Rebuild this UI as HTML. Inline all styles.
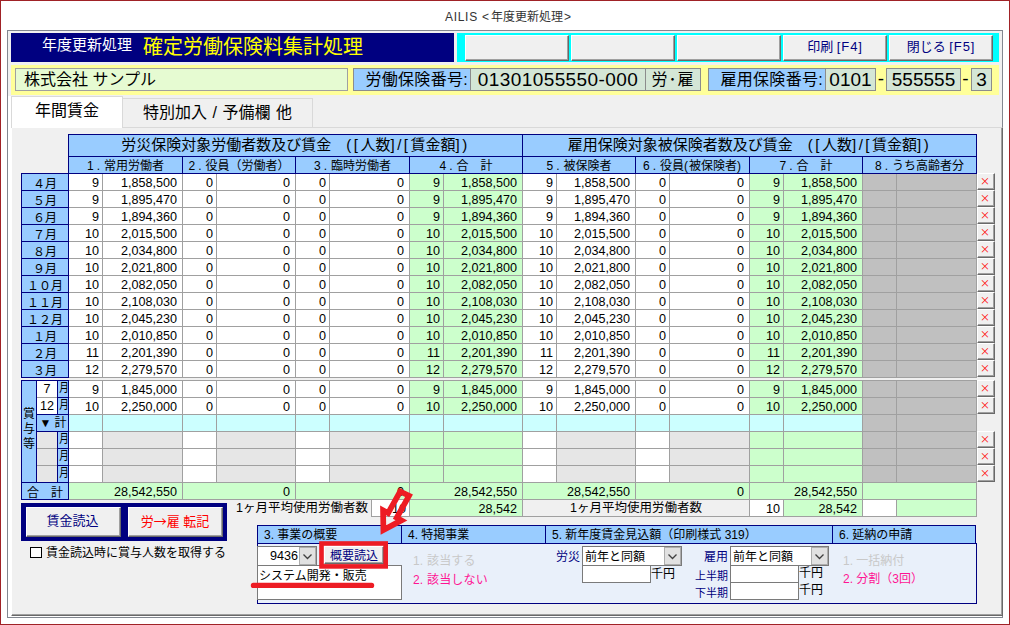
<!DOCTYPE html>
<html lang="ja"><head><meta charset="utf-8"><title>AILIS</title>
<style>
html,body{margin:0;padding:0}
body{width:1010px;height:625px;position:relative;overflow:hidden;background:#fff;font-family:"Liberation Sans","Noto Sans CJK JP",sans-serif;color:#000}
div,span{position:absolute;box-sizing:border-box;white-space:nowrap}
svg{position:absolute}
.n{font-size:12.6px;line-height:18px;text-align:right;overflow:hidden}
.c{padding-right:3px}
.m{padding-right:5px}
.hd{background:#99ccff;border:1px solid #000080;text-align:center}
.h1{font-size:15px;line-height:19px}
i{font-style:normal}
.h2 i{margin:0 4px 0 3px}
.nr{display:inline-block;transform:scaleX(.8)}
.q{letter-spacing:.9px}
.p{letter-spacing:2.5px}
.h2{font-size:12px;line-height:18px}
.lb{background:#99ccff;border:1px solid #000080;text-align:center;font-size:12px;line-height:20px;overflow:hidden}
.btn{background:#f0f0f0;border-top:1px solid #fff;border-left:1px solid #fff;border-right:1px solid #696969;border-bottom:1px solid #696969;box-shadow:inset -1px -1px 0 #a0a0a0;text-align:center;color:#000080}
.xb{background:#f0f0f0;border-top:1px solid #fff;border-left:1px solid #fff;border-right:1px solid #696969;border-bottom:1px solid #696969;box-shadow:inset -1px -1px 0 #a0a0a0;text-align:center;color:#f00;font-family:"Noto Sans CJK JP",sans-serif;font-size:10px;line-height:13px;text-indent:-2px}
.sh{background:#99ccff;border:1px solid #000080;font-size:12px;line-height:18px;padding-left:6px}
.fld{background:#d4e6d6;border:1px solid #8c8c8c;font-size:19px;line-height:21px;text-align:center}
.t12{font-size:12px;line-height:14px}
.inp{background:#fff;border:1px solid #7a7a7a}
</style></head><body>

<div style="left:0px;top:0px;width:1010px;height:625px;border:1px solid #a02226;"></div>
<div style="left:445px;top:9px;width:140px;height:16px;font-size:12px;line-height:16px;color:#333;"><i style="letter-spacing:.7px">AILIS </i><i style="letter-spacing:2px">&lt;</i>年度更新処理<i style="margin-left:1px">&gt;</i></div>
<div style="left:7px;top:30px;width:996px;height:588px;border:1px solid #828790;background:#f0f0f0;"></div>
<div style="left:11px;top:33px;width:443px;height:29px;background:#000080;"></div>
<div style="left:42px;top:35px;width:100px;height:20px;color:#fff;font-size:15px;line-height:20px;">年度更新処理</div>
<div style="left:143px;top:35px;width:300px;height:24px;color:#ffff00;font-size:20px;line-height:24px;">確定労働保険料集計処理</div>
<div style="left:457px;top:33px;width:542px;height:29px;background:#00ffff;"></div>
<div class="btn" style="left:465px;top:35px;width:104px;height:26px;font-size:13px;line-height:22px;"></div>
<div class="btn" style="left:571px;top:35px;width:104px;height:26px;font-size:13px;line-height:22px;"></div>
<div class="btn" style="left:677px;top:35px;width:104px;height:26px;font-size:13px;line-height:22px;"></div>
<div class="btn" style="left:783px;top:35px;width:104px;height:26px;font-size:13px;line-height:22px;">印刷 <i class="q">[F4]</i></div>
<div class="btn" style="left:889px;top:35px;width:104px;height:26px;font-size:13px;line-height:22px;">閉じる <i class="q">[F5]</i></div>
<div style="left:11px;top:65px;width:988px;height:30px;background:#ffff99;"></div>
<div style="left:15px;top:68px;width:333px;height:23px;background:#e6fbd2;border:1px solid #a0a0a0;font-size:16px;line-height:21px;padding-left:8px;">株式会社 サンプル</div>
<div style="left:353px;top:68px;width:118px;height:23px;background:#99ccff;border:1px solid #8c8c8c;font-size:16px;line-height:21px;text-align:right;padding-right:2px;letter-spacing:.3px;">労働保険番号:</div>
<div class="fld" style="left:470px;top:68px;width:176px;height:23px;letter-spacing:.4px;">01301055550-000</div>
<div class="fld" style="left:645px;top:68px;width:56px;height:23px;font-size:16px;letter-spacing:1px;">労･雇</div>
<div style="left:708px;top:68px;width:118px;height:23px;background:#99ccff;border:1px solid #8c8c8c;font-size:16px;line-height:21px;text-align:right;padding-right:2px;letter-spacing:.3px;">雇用保険番号:</div>
<div class="fld" style="left:825px;top:68px;width:51px;height:23px;">0101</div>
<div style="left:876px;top:68px;width:10px;height:23px;font-size:19px;line-height:21px;text-align:center;">-</div>
<div class="fld" style="left:886px;top:68px;width:75px;height:23px;">555555</div>
<div style="left:960px;top:68px;width:11px;height:23px;font-size:19px;line-height:21px;text-align:center;">-</div>
<div class="fld" style="left:971px;top:68px;width:21px;height:23px;">3</div>
<div style="left:8px;top:96px;width:4px;height:521px;background:#fff;"></div>
<div style="left:8px;top:616px;width:994px;height:1px;background:#fff;"></div>
<div style="left:11px;top:127px;width:992px;height:489px;background:#f0f0f0;border-top:1px solid #d9d9d9;border-left:1px solid #fff;border-right:1px solid #696969;border-bottom:1px solid #696969;box-shadow:inset -1px -1px 0 #a0a0a0;"></div>
<div style="left:122px;top:98px;width:191px;height:29px;background:#f0f0f0;border:1px solid #d9d9d9;border-bottom:none;font-size:16px;line-height:27px;text-align:center;word-spacing:1px;">特別加入 / 予備欄 他</div>
<div style="left:11px;top:96px;width:112px;height:32px;background:#fff;border:1px solid #d9d9d9;border-bottom:none;font-size:16px;line-height:27px;text-align:center;">年間賃金</div>
<div style="left:68px;top:173px;width:909px;height:18px;background:#a0a0a0;"></div>
<div class="n c" style="left:69px;top:174px;width:33px;height:16px;background:#fff;">9</div>
<div class="n m" style="left:103px;top:174px;width:79px;height:16px;background:#fff;">1,858,500</div>
<div class="n c" style="left:183px;top:174px;width:33px;height:16px;background:#fff;">0</div>
<div class="n m" style="left:217px;top:174px;width:78px;height:16px;background:#fff;">0</div>
<div class="n c" style="left:296px;top:174px;width:33px;height:16px;background:#fff;">0</div>
<div class="n m" style="left:330px;top:174px;width:79px;height:16px;background:#fff;">0</div>
<div class="n c" style="left:410px;top:174px;width:33px;height:16px;background:#ccffcc;">9</div>
<div class="n m" style="left:444px;top:174px;width:78px;height:16px;background:#ccffcc;">1,858,500</div>
<div class="n c" style="left:523px;top:174px;width:33px;height:16px;background:#fff;">9</div>
<div class="n m" style="left:557px;top:174px;width:78px;height:16px;background:#fff;">1,858,500</div>
<div class="n c" style="left:636px;top:174px;width:33px;height:16px;background:#fff;">0</div>
<div class="n m" style="left:670px;top:174px;width:79px;height:16px;background:#fff;">0</div>
<div class="n c" style="left:750px;top:174px;width:33px;height:16px;background:#ccffcc;">9</div>
<div class="n m" style="left:784px;top:174px;width:78px;height:16px;background:#ccffcc;">1,858,500</div>
<div class="n c" style="left:863px;top:174px;width:33px;height:16px;background:#c0c0c0;"></div>
<div class="n m" style="left:897px;top:174px;width:79px;height:16px;background:#c0c0c0;"></div>
<div class="lb" style="left:21px;top:173px;width:48px;height:18px;">４月</div>
<div class="xb" style="left:977px;top:173px;width:18px;height:17px;">×</div>
<div style="left:68px;top:190px;width:909px;height:18px;background:#a0a0a0;"></div>
<div class="n c" style="left:69px;top:191px;width:33px;height:16px;background:#fff;">9</div>
<div class="n m" style="left:103px;top:191px;width:79px;height:16px;background:#fff;">1,895,470</div>
<div class="n c" style="left:183px;top:191px;width:33px;height:16px;background:#fff;">0</div>
<div class="n m" style="left:217px;top:191px;width:78px;height:16px;background:#fff;">0</div>
<div class="n c" style="left:296px;top:191px;width:33px;height:16px;background:#fff;">0</div>
<div class="n m" style="left:330px;top:191px;width:79px;height:16px;background:#fff;">0</div>
<div class="n c" style="left:410px;top:191px;width:33px;height:16px;background:#ccffcc;">9</div>
<div class="n m" style="left:444px;top:191px;width:78px;height:16px;background:#ccffcc;">1,895,470</div>
<div class="n c" style="left:523px;top:191px;width:33px;height:16px;background:#fff;">9</div>
<div class="n m" style="left:557px;top:191px;width:78px;height:16px;background:#fff;">1,895,470</div>
<div class="n c" style="left:636px;top:191px;width:33px;height:16px;background:#fff;">0</div>
<div class="n m" style="left:670px;top:191px;width:79px;height:16px;background:#fff;">0</div>
<div class="n c" style="left:750px;top:191px;width:33px;height:16px;background:#ccffcc;">9</div>
<div class="n m" style="left:784px;top:191px;width:78px;height:16px;background:#ccffcc;">1,895,470</div>
<div class="n c" style="left:863px;top:191px;width:33px;height:16px;background:#c0c0c0;"></div>
<div class="n m" style="left:897px;top:191px;width:79px;height:16px;background:#c0c0c0;"></div>
<div class="lb" style="left:21px;top:190px;width:48px;height:18px;">５月</div>
<div class="xb" style="left:977px;top:190px;width:18px;height:17px;">×</div>
<div style="left:68px;top:207px;width:909px;height:18px;background:#a0a0a0;"></div>
<div class="n c" style="left:69px;top:208px;width:33px;height:16px;background:#fff;">9</div>
<div class="n m" style="left:103px;top:208px;width:79px;height:16px;background:#fff;">1,894,360</div>
<div class="n c" style="left:183px;top:208px;width:33px;height:16px;background:#fff;">0</div>
<div class="n m" style="left:217px;top:208px;width:78px;height:16px;background:#fff;">0</div>
<div class="n c" style="left:296px;top:208px;width:33px;height:16px;background:#fff;">0</div>
<div class="n m" style="left:330px;top:208px;width:79px;height:16px;background:#fff;">0</div>
<div class="n c" style="left:410px;top:208px;width:33px;height:16px;background:#ccffcc;">9</div>
<div class="n m" style="left:444px;top:208px;width:78px;height:16px;background:#ccffcc;">1,894,360</div>
<div class="n c" style="left:523px;top:208px;width:33px;height:16px;background:#fff;">9</div>
<div class="n m" style="left:557px;top:208px;width:78px;height:16px;background:#fff;">1,894,360</div>
<div class="n c" style="left:636px;top:208px;width:33px;height:16px;background:#fff;">0</div>
<div class="n m" style="left:670px;top:208px;width:79px;height:16px;background:#fff;">0</div>
<div class="n c" style="left:750px;top:208px;width:33px;height:16px;background:#ccffcc;">9</div>
<div class="n m" style="left:784px;top:208px;width:78px;height:16px;background:#ccffcc;">1,894,360</div>
<div class="n c" style="left:863px;top:208px;width:33px;height:16px;background:#c0c0c0;"></div>
<div class="n m" style="left:897px;top:208px;width:79px;height:16px;background:#c0c0c0;"></div>
<div class="lb" style="left:21px;top:207px;width:48px;height:18px;">６月</div>
<div class="xb" style="left:977px;top:207px;width:18px;height:17px;">×</div>
<div style="left:68px;top:224px;width:909px;height:18px;background:#a0a0a0;"></div>
<div class="n c" style="left:69px;top:225px;width:33px;height:16px;background:#fff;">10</div>
<div class="n m" style="left:103px;top:225px;width:79px;height:16px;background:#fff;">2,015,500</div>
<div class="n c" style="left:183px;top:225px;width:33px;height:16px;background:#fff;">0</div>
<div class="n m" style="left:217px;top:225px;width:78px;height:16px;background:#fff;">0</div>
<div class="n c" style="left:296px;top:225px;width:33px;height:16px;background:#fff;">0</div>
<div class="n m" style="left:330px;top:225px;width:79px;height:16px;background:#fff;">0</div>
<div class="n c" style="left:410px;top:225px;width:33px;height:16px;background:#ccffcc;">10</div>
<div class="n m" style="left:444px;top:225px;width:78px;height:16px;background:#ccffcc;">2,015,500</div>
<div class="n c" style="left:523px;top:225px;width:33px;height:16px;background:#fff;">10</div>
<div class="n m" style="left:557px;top:225px;width:78px;height:16px;background:#fff;">2,015,500</div>
<div class="n c" style="left:636px;top:225px;width:33px;height:16px;background:#fff;">0</div>
<div class="n m" style="left:670px;top:225px;width:79px;height:16px;background:#fff;">0</div>
<div class="n c" style="left:750px;top:225px;width:33px;height:16px;background:#ccffcc;">10</div>
<div class="n m" style="left:784px;top:225px;width:78px;height:16px;background:#ccffcc;">2,015,500</div>
<div class="n c" style="left:863px;top:225px;width:33px;height:16px;background:#c0c0c0;"></div>
<div class="n m" style="left:897px;top:225px;width:79px;height:16px;background:#c0c0c0;"></div>
<div class="lb" style="left:21px;top:224px;width:48px;height:18px;">７月</div>
<div class="xb" style="left:977px;top:224px;width:18px;height:17px;">×</div>
<div style="left:68px;top:241px;width:909px;height:18px;background:#a0a0a0;"></div>
<div class="n c" style="left:69px;top:242px;width:33px;height:16px;background:#fff;">10</div>
<div class="n m" style="left:103px;top:242px;width:79px;height:16px;background:#fff;">2,034,800</div>
<div class="n c" style="left:183px;top:242px;width:33px;height:16px;background:#fff;">0</div>
<div class="n m" style="left:217px;top:242px;width:78px;height:16px;background:#fff;">0</div>
<div class="n c" style="left:296px;top:242px;width:33px;height:16px;background:#fff;">0</div>
<div class="n m" style="left:330px;top:242px;width:79px;height:16px;background:#fff;">0</div>
<div class="n c" style="left:410px;top:242px;width:33px;height:16px;background:#ccffcc;">10</div>
<div class="n m" style="left:444px;top:242px;width:78px;height:16px;background:#ccffcc;">2,034,800</div>
<div class="n c" style="left:523px;top:242px;width:33px;height:16px;background:#fff;">10</div>
<div class="n m" style="left:557px;top:242px;width:78px;height:16px;background:#fff;">2,034,800</div>
<div class="n c" style="left:636px;top:242px;width:33px;height:16px;background:#fff;">0</div>
<div class="n m" style="left:670px;top:242px;width:79px;height:16px;background:#fff;">0</div>
<div class="n c" style="left:750px;top:242px;width:33px;height:16px;background:#ccffcc;">10</div>
<div class="n m" style="left:784px;top:242px;width:78px;height:16px;background:#ccffcc;">2,034,800</div>
<div class="n c" style="left:863px;top:242px;width:33px;height:16px;background:#c0c0c0;"></div>
<div class="n m" style="left:897px;top:242px;width:79px;height:16px;background:#c0c0c0;"></div>
<div class="lb" style="left:21px;top:241px;width:48px;height:18px;">８月</div>
<div class="xb" style="left:977px;top:241px;width:18px;height:17px;">×</div>
<div style="left:68px;top:258px;width:909px;height:18px;background:#a0a0a0;"></div>
<div class="n c" style="left:69px;top:259px;width:33px;height:16px;background:#fff;">10</div>
<div class="n m" style="left:103px;top:259px;width:79px;height:16px;background:#fff;">2,021,800</div>
<div class="n c" style="left:183px;top:259px;width:33px;height:16px;background:#fff;">0</div>
<div class="n m" style="left:217px;top:259px;width:78px;height:16px;background:#fff;">0</div>
<div class="n c" style="left:296px;top:259px;width:33px;height:16px;background:#fff;">0</div>
<div class="n m" style="left:330px;top:259px;width:79px;height:16px;background:#fff;">0</div>
<div class="n c" style="left:410px;top:259px;width:33px;height:16px;background:#ccffcc;">10</div>
<div class="n m" style="left:444px;top:259px;width:78px;height:16px;background:#ccffcc;">2,021,800</div>
<div class="n c" style="left:523px;top:259px;width:33px;height:16px;background:#fff;">10</div>
<div class="n m" style="left:557px;top:259px;width:78px;height:16px;background:#fff;">2,021,800</div>
<div class="n c" style="left:636px;top:259px;width:33px;height:16px;background:#fff;">0</div>
<div class="n m" style="left:670px;top:259px;width:79px;height:16px;background:#fff;">0</div>
<div class="n c" style="left:750px;top:259px;width:33px;height:16px;background:#ccffcc;">10</div>
<div class="n m" style="left:784px;top:259px;width:78px;height:16px;background:#ccffcc;">2,021,800</div>
<div class="n c" style="left:863px;top:259px;width:33px;height:16px;background:#c0c0c0;"></div>
<div class="n m" style="left:897px;top:259px;width:79px;height:16px;background:#c0c0c0;"></div>
<div class="lb" style="left:21px;top:258px;width:48px;height:18px;">９月</div>
<div class="xb" style="left:977px;top:258px;width:18px;height:17px;">×</div>
<div style="left:68px;top:275px;width:909px;height:18px;background:#a0a0a0;"></div>
<div class="n c" style="left:69px;top:276px;width:33px;height:16px;background:#fff;">10</div>
<div class="n m" style="left:103px;top:276px;width:79px;height:16px;background:#fff;">2,082,050</div>
<div class="n c" style="left:183px;top:276px;width:33px;height:16px;background:#fff;">0</div>
<div class="n m" style="left:217px;top:276px;width:78px;height:16px;background:#fff;">0</div>
<div class="n c" style="left:296px;top:276px;width:33px;height:16px;background:#fff;">0</div>
<div class="n m" style="left:330px;top:276px;width:79px;height:16px;background:#fff;">0</div>
<div class="n c" style="left:410px;top:276px;width:33px;height:16px;background:#ccffcc;">10</div>
<div class="n m" style="left:444px;top:276px;width:78px;height:16px;background:#ccffcc;">2,082,050</div>
<div class="n c" style="left:523px;top:276px;width:33px;height:16px;background:#fff;">10</div>
<div class="n m" style="left:557px;top:276px;width:78px;height:16px;background:#fff;">2,082,050</div>
<div class="n c" style="left:636px;top:276px;width:33px;height:16px;background:#fff;">0</div>
<div class="n m" style="left:670px;top:276px;width:79px;height:16px;background:#fff;">0</div>
<div class="n c" style="left:750px;top:276px;width:33px;height:16px;background:#ccffcc;">10</div>
<div class="n m" style="left:784px;top:276px;width:78px;height:16px;background:#ccffcc;">2,082,050</div>
<div class="n c" style="left:863px;top:276px;width:33px;height:16px;background:#c0c0c0;"></div>
<div class="n m" style="left:897px;top:276px;width:79px;height:16px;background:#c0c0c0;"></div>
<div class="lb" style="left:21px;top:275px;width:48px;height:18px;">１０月</div>
<div class="xb" style="left:977px;top:275px;width:18px;height:17px;">×</div>
<div style="left:68px;top:292px;width:909px;height:18px;background:#a0a0a0;"></div>
<div class="n c" style="left:69px;top:293px;width:33px;height:16px;background:#fff;">10</div>
<div class="n m" style="left:103px;top:293px;width:79px;height:16px;background:#fff;">2,108,030</div>
<div class="n c" style="left:183px;top:293px;width:33px;height:16px;background:#fff;">0</div>
<div class="n m" style="left:217px;top:293px;width:78px;height:16px;background:#fff;">0</div>
<div class="n c" style="left:296px;top:293px;width:33px;height:16px;background:#fff;">0</div>
<div class="n m" style="left:330px;top:293px;width:79px;height:16px;background:#fff;">0</div>
<div class="n c" style="left:410px;top:293px;width:33px;height:16px;background:#ccffcc;">10</div>
<div class="n m" style="left:444px;top:293px;width:78px;height:16px;background:#ccffcc;">2,108,030</div>
<div class="n c" style="left:523px;top:293px;width:33px;height:16px;background:#fff;">10</div>
<div class="n m" style="left:557px;top:293px;width:78px;height:16px;background:#fff;">2,108,030</div>
<div class="n c" style="left:636px;top:293px;width:33px;height:16px;background:#fff;">0</div>
<div class="n m" style="left:670px;top:293px;width:79px;height:16px;background:#fff;">0</div>
<div class="n c" style="left:750px;top:293px;width:33px;height:16px;background:#ccffcc;">10</div>
<div class="n m" style="left:784px;top:293px;width:78px;height:16px;background:#ccffcc;">2,108,030</div>
<div class="n c" style="left:863px;top:293px;width:33px;height:16px;background:#c0c0c0;"></div>
<div class="n m" style="left:897px;top:293px;width:79px;height:16px;background:#c0c0c0;"></div>
<div class="lb" style="left:21px;top:292px;width:48px;height:18px;">１１月</div>
<div class="xb" style="left:977px;top:292px;width:18px;height:17px;">×</div>
<div style="left:68px;top:309px;width:909px;height:18px;background:#a0a0a0;"></div>
<div class="n c" style="left:69px;top:310px;width:33px;height:16px;background:#fff;">10</div>
<div class="n m" style="left:103px;top:310px;width:79px;height:16px;background:#fff;">2,045,230</div>
<div class="n c" style="left:183px;top:310px;width:33px;height:16px;background:#fff;">0</div>
<div class="n m" style="left:217px;top:310px;width:78px;height:16px;background:#fff;">0</div>
<div class="n c" style="left:296px;top:310px;width:33px;height:16px;background:#fff;">0</div>
<div class="n m" style="left:330px;top:310px;width:79px;height:16px;background:#fff;">0</div>
<div class="n c" style="left:410px;top:310px;width:33px;height:16px;background:#ccffcc;">10</div>
<div class="n m" style="left:444px;top:310px;width:78px;height:16px;background:#ccffcc;">2,045,230</div>
<div class="n c" style="left:523px;top:310px;width:33px;height:16px;background:#fff;">10</div>
<div class="n m" style="left:557px;top:310px;width:78px;height:16px;background:#fff;">2,045,230</div>
<div class="n c" style="left:636px;top:310px;width:33px;height:16px;background:#fff;">0</div>
<div class="n m" style="left:670px;top:310px;width:79px;height:16px;background:#fff;">0</div>
<div class="n c" style="left:750px;top:310px;width:33px;height:16px;background:#ccffcc;">10</div>
<div class="n m" style="left:784px;top:310px;width:78px;height:16px;background:#ccffcc;">2,045,230</div>
<div class="n c" style="left:863px;top:310px;width:33px;height:16px;background:#c0c0c0;"></div>
<div class="n m" style="left:897px;top:310px;width:79px;height:16px;background:#c0c0c0;"></div>
<div class="lb" style="left:21px;top:309px;width:48px;height:18px;">１２月</div>
<div class="xb" style="left:977px;top:309px;width:18px;height:17px;">×</div>
<div style="left:68px;top:326px;width:909px;height:18px;background:#a0a0a0;"></div>
<div class="n c" style="left:69px;top:327px;width:33px;height:16px;background:#fff;">10</div>
<div class="n m" style="left:103px;top:327px;width:79px;height:16px;background:#fff;">2,010,850</div>
<div class="n c" style="left:183px;top:327px;width:33px;height:16px;background:#fff;">0</div>
<div class="n m" style="left:217px;top:327px;width:78px;height:16px;background:#fff;">0</div>
<div class="n c" style="left:296px;top:327px;width:33px;height:16px;background:#fff;">0</div>
<div class="n m" style="left:330px;top:327px;width:79px;height:16px;background:#fff;">0</div>
<div class="n c" style="left:410px;top:327px;width:33px;height:16px;background:#ccffcc;">10</div>
<div class="n m" style="left:444px;top:327px;width:78px;height:16px;background:#ccffcc;">2,010,850</div>
<div class="n c" style="left:523px;top:327px;width:33px;height:16px;background:#fff;">10</div>
<div class="n m" style="left:557px;top:327px;width:78px;height:16px;background:#fff;">2,010,850</div>
<div class="n c" style="left:636px;top:327px;width:33px;height:16px;background:#fff;">0</div>
<div class="n m" style="left:670px;top:327px;width:79px;height:16px;background:#fff;">0</div>
<div class="n c" style="left:750px;top:327px;width:33px;height:16px;background:#ccffcc;">10</div>
<div class="n m" style="left:784px;top:327px;width:78px;height:16px;background:#ccffcc;">2,010,850</div>
<div class="n c" style="left:863px;top:327px;width:33px;height:16px;background:#c0c0c0;"></div>
<div class="n m" style="left:897px;top:327px;width:79px;height:16px;background:#c0c0c0;"></div>
<div class="lb" style="left:21px;top:326px;width:48px;height:18px;">１月</div>
<div class="xb" style="left:977px;top:326px;width:18px;height:17px;">×</div>
<div style="left:68px;top:343px;width:909px;height:18px;background:#a0a0a0;"></div>
<div class="n c" style="left:69px;top:344px;width:33px;height:16px;background:#fff;">11</div>
<div class="n m" style="left:103px;top:344px;width:79px;height:16px;background:#fff;">2,201,390</div>
<div class="n c" style="left:183px;top:344px;width:33px;height:16px;background:#fff;">0</div>
<div class="n m" style="left:217px;top:344px;width:78px;height:16px;background:#fff;">0</div>
<div class="n c" style="left:296px;top:344px;width:33px;height:16px;background:#fff;">0</div>
<div class="n m" style="left:330px;top:344px;width:79px;height:16px;background:#fff;">0</div>
<div class="n c" style="left:410px;top:344px;width:33px;height:16px;background:#ccffcc;">11</div>
<div class="n m" style="left:444px;top:344px;width:78px;height:16px;background:#ccffcc;">2,201,390</div>
<div class="n c" style="left:523px;top:344px;width:33px;height:16px;background:#fff;">11</div>
<div class="n m" style="left:557px;top:344px;width:78px;height:16px;background:#fff;">2,201,390</div>
<div class="n c" style="left:636px;top:344px;width:33px;height:16px;background:#fff;">0</div>
<div class="n m" style="left:670px;top:344px;width:79px;height:16px;background:#fff;">0</div>
<div class="n c" style="left:750px;top:344px;width:33px;height:16px;background:#ccffcc;">11</div>
<div class="n m" style="left:784px;top:344px;width:78px;height:16px;background:#ccffcc;">2,201,390</div>
<div class="n c" style="left:863px;top:344px;width:33px;height:16px;background:#c0c0c0;"></div>
<div class="n m" style="left:897px;top:344px;width:79px;height:16px;background:#c0c0c0;"></div>
<div class="lb" style="left:21px;top:343px;width:48px;height:18px;">２月</div>
<div class="xb" style="left:977px;top:343px;width:18px;height:17px;">×</div>
<div style="left:68px;top:360px;width:909px;height:18px;background:#a0a0a0;"></div>
<div class="n c" style="left:69px;top:361px;width:33px;height:16px;background:#fff;">12</div>
<div class="n m" style="left:103px;top:361px;width:79px;height:16px;background:#fff;">2,279,570</div>
<div class="n c" style="left:183px;top:361px;width:33px;height:16px;background:#fff;">0</div>
<div class="n m" style="left:217px;top:361px;width:78px;height:16px;background:#fff;">0</div>
<div class="n c" style="left:296px;top:361px;width:33px;height:16px;background:#fff;">0</div>
<div class="n m" style="left:330px;top:361px;width:79px;height:16px;background:#fff;">0</div>
<div class="n c" style="left:410px;top:361px;width:33px;height:16px;background:#ccffcc;">12</div>
<div class="n m" style="left:444px;top:361px;width:78px;height:16px;background:#ccffcc;">2,279,570</div>
<div class="n c" style="left:523px;top:361px;width:33px;height:16px;background:#fff;">12</div>
<div class="n m" style="left:557px;top:361px;width:78px;height:16px;background:#fff;">2,279,570</div>
<div class="n c" style="left:636px;top:361px;width:33px;height:16px;background:#fff;">0</div>
<div class="n m" style="left:670px;top:361px;width:79px;height:16px;background:#fff;">0</div>
<div class="n c" style="left:750px;top:361px;width:33px;height:16px;background:#ccffcc;">12</div>
<div class="n m" style="left:784px;top:361px;width:78px;height:16px;background:#ccffcc;">2,279,570</div>
<div class="n c" style="left:863px;top:361px;width:33px;height:16px;background:#c0c0c0;"></div>
<div class="n m" style="left:897px;top:361px;width:79px;height:16px;background:#c0c0c0;"></div>
<div class="lb" style="left:21px;top:360px;width:48px;height:18px;">３月</div>
<div class="xb" style="left:977px;top:360px;width:18px;height:17px;">×</div>
<div class="hd h1" style="left:68px;top:134px;width:455px;height:23px;">労災保険対象労働者数及び賃金　<i class="p">([</i>人数<i class="p">]/[</i>賃金額<i class="p">])</i></div>
<div class="hd h1" style="left:522px;top:134px;width:455px;height:23px;">雇用保険対象被保険者数及び賃金　<i class="p">([</i>人数<i class="p">]/[</i>賃金額<i class="p">])</i></div>
<div class="hd h2" style="left:68px;top:156px;width:115px;height:18px;">1<i>.</i>常用労働者</div>
<div class="hd h2" style="left:182px;top:156px;width:114px;height:18px;">2<i>.</i>役員（労働者）</div>
<div class="hd h2" style="left:295px;top:156px;width:115px;height:18px;">3<i>.</i>臨時労働者</div>
<div class="hd h2" style="left:409px;top:156px;width:114px;height:18px;">4<i>.</i>合　計</div>
<div class="hd h2" style="left:522px;top:156px;width:114px;height:18px;">5<i>.</i>被保険者</div>
<div class="hd h2" style="left:635px;top:156px;width:115px;height:18px;">6<i>.</i>役員<i class="q" style="margin:0">(</i>被保険者<i class="q" style="margin:0">)</i></div>
<div class="hd h2" style="left:749px;top:156px;width:114px;height:18px;">7<i>.</i>合　計</div>
<div class="hd h2" style="left:862px;top:156px;width:115px;height:18px;">8<i>.</i>うち高齢者分</div>
<div style="left:68px;top:380px;width:909px;height:18px;background:#a0a0a0;"></div>
<div class="n c" style="left:69px;top:381px;width:33px;height:16px;background:#fff;">9</div>
<div class="n m" style="left:103px;top:381px;width:79px;height:16px;background:#fff;">1,845,000</div>
<div class="n c" style="left:183px;top:381px;width:33px;height:16px;background:#fff;">0</div>
<div class="n m" style="left:217px;top:381px;width:78px;height:16px;background:#fff;">0</div>
<div class="n c" style="left:296px;top:381px;width:33px;height:16px;background:#fff;">0</div>
<div class="n m" style="left:330px;top:381px;width:79px;height:16px;background:#fff;">0</div>
<div class="n c" style="left:410px;top:381px;width:33px;height:16px;background:#ccffcc;">9</div>
<div class="n m" style="left:444px;top:381px;width:78px;height:16px;background:#ccffcc;">1,845,000</div>
<div class="n c" style="left:523px;top:381px;width:33px;height:16px;background:#fff;">9</div>
<div class="n m" style="left:557px;top:381px;width:78px;height:16px;background:#fff;">1,845,000</div>
<div class="n c" style="left:636px;top:381px;width:33px;height:16px;background:#fff;">0</div>
<div class="n m" style="left:670px;top:381px;width:79px;height:16px;background:#fff;">0</div>
<div class="n c" style="left:750px;top:381px;width:33px;height:16px;background:#ccffcc;">9</div>
<div class="n m" style="left:784px;top:381px;width:78px;height:16px;background:#ccffcc;">1,845,000</div>
<div class="n c" style="left:863px;top:381px;width:33px;height:16px;background:#c0c0c0;"></div>
<div class="n m" style="left:897px;top:381px;width:79px;height:16px;background:#c0c0c0;"></div>
<div style="left:36px;top:380px;width:22px;height:18px;background:#fff;border:1px solid #000080;border-top-color:#000080;border-bottom:none;font-size:12.6px;line-height:17px;text-align:center;">7</div>
<div class="lb" style="left:57px;top:380px;width:12px;height:18px;font-size:12px;line-height:14px;text-indent:0;text-align:left;"><i class="nr">月</i></div>
<div class="xb" style="left:977px;top:380px;width:18px;height:17px;">×</div>
<div style="left:68px;top:397px;width:909px;height:18px;background:#a0a0a0;"></div>
<div class="n c" style="left:69px;top:398px;width:33px;height:16px;background:#fff;">10</div>
<div class="n m" style="left:103px;top:398px;width:79px;height:16px;background:#fff;">2,250,000</div>
<div class="n c" style="left:183px;top:398px;width:33px;height:16px;background:#fff;">0</div>
<div class="n m" style="left:217px;top:398px;width:78px;height:16px;background:#fff;">0</div>
<div class="n c" style="left:296px;top:398px;width:33px;height:16px;background:#fff;">0</div>
<div class="n m" style="left:330px;top:398px;width:79px;height:16px;background:#fff;">0</div>
<div class="n c" style="left:410px;top:398px;width:33px;height:16px;background:#ccffcc;">10</div>
<div class="n m" style="left:444px;top:398px;width:78px;height:16px;background:#ccffcc;">2,250,000</div>
<div class="n c" style="left:523px;top:398px;width:33px;height:16px;background:#fff;">10</div>
<div class="n m" style="left:557px;top:398px;width:78px;height:16px;background:#fff;">2,250,000</div>
<div class="n c" style="left:636px;top:398px;width:33px;height:16px;background:#fff;">0</div>
<div class="n m" style="left:670px;top:398px;width:79px;height:16px;background:#fff;">0</div>
<div class="n c" style="left:750px;top:398px;width:33px;height:16px;background:#ccffcc;">10</div>
<div class="n m" style="left:784px;top:398px;width:78px;height:16px;background:#ccffcc;">2,250,000</div>
<div class="n c" style="left:863px;top:398px;width:33px;height:16px;background:#c0c0c0;"></div>
<div class="n m" style="left:897px;top:398px;width:79px;height:16px;background:#c0c0c0;"></div>
<div style="left:36px;top:397px;width:22px;height:18px;background:#fff;border:1px solid #000080;border-top-color:#a0a0a0;border-bottom:none;font-size:12.6px;line-height:17px;text-align:center;">12</div>
<div class="lb" style="left:57px;top:397px;width:12px;height:18px;font-size:12px;line-height:14px;text-indent:0;text-align:left;"><i class="nr">月</i></div>
<div class="xb" style="left:977px;top:397px;width:18px;height:17px;">×</div>
<div style="left:68px;top:414px;width:909px;height:18px;background:#a0a0a0;"></div>
<div class="n c" style="left:69px;top:415px;width:33px;height:16px;background:#ccffff;"></div>
<div class="n m" style="left:103px;top:415px;width:79px;height:16px;background:#ccffff;"></div>
<div class="n c" style="left:183px;top:415px;width:33px;height:16px;background:#ccffff;"></div>
<div class="n m" style="left:217px;top:415px;width:78px;height:16px;background:#ccffff;"></div>
<div class="n c" style="left:296px;top:415px;width:33px;height:16px;background:#ccffff;"></div>
<div class="n m" style="left:330px;top:415px;width:79px;height:16px;background:#ccffff;"></div>
<div class="n c" style="left:410px;top:415px;width:33px;height:16px;background:#ccffff;"></div>
<div class="n m" style="left:444px;top:415px;width:78px;height:16px;background:#ccffff;"></div>
<div class="n c" style="left:523px;top:415px;width:33px;height:16px;background:#ccffff;"></div>
<div class="n m" style="left:557px;top:415px;width:78px;height:16px;background:#ccffff;"></div>
<div class="n c" style="left:636px;top:415px;width:33px;height:16px;background:#ccffff;"></div>
<div class="n m" style="left:670px;top:415px;width:79px;height:16px;background:#ccffff;"></div>
<div class="n c" style="left:750px;top:415px;width:33px;height:16px;background:#ccffff;"></div>
<div class="n m" style="left:784px;top:415px;width:78px;height:16px;background:#ccffff;"></div>
<div class="n c" style="left:863px;top:415px;width:33px;height:16px;background:#c0c0c0;"></div>
<div class="n m" style="left:897px;top:415px;width:79px;height:16px;background:#c0c0c0;"></div>
<div class="lb" style="left:36px;top:414px;width:33px;height:18px;font-size:12px;line-height:17px;text-indent:1px;">▼ 計</div>
<div style="left:68px;top:431px;width:909px;height:18px;background:#a0a0a0;"></div>
<div class="n c" style="left:69px;top:432px;width:33px;height:16px;background:#fff;"></div>
<div class="n m" style="left:103px;top:432px;width:79px;height:16px;background:#e6e6e6;"></div>
<div class="n c" style="left:183px;top:432px;width:33px;height:16px;background:#fff;"></div>
<div class="n m" style="left:217px;top:432px;width:78px;height:16px;background:#e6e6e6;"></div>
<div class="n c" style="left:296px;top:432px;width:33px;height:16px;background:#fff;"></div>
<div class="n m" style="left:330px;top:432px;width:79px;height:16px;background:#e6e6e6;"></div>
<div class="n c" style="left:410px;top:432px;width:33px;height:16px;background:#ccffcc;"></div>
<div class="n m" style="left:444px;top:432px;width:78px;height:16px;background:#ccffcc;"></div>
<div class="n c" style="left:523px;top:432px;width:33px;height:16px;background:#fff;"></div>
<div class="n m" style="left:557px;top:432px;width:78px;height:16px;background:#e6e6e6;"></div>
<div class="n c" style="left:636px;top:432px;width:33px;height:16px;background:#fff;"></div>
<div class="n m" style="left:670px;top:432px;width:79px;height:16px;background:#e6e6e6;"></div>
<div class="n c" style="left:750px;top:432px;width:33px;height:16px;background:#ccffcc;"></div>
<div class="n m" style="left:784px;top:432px;width:78px;height:16px;background:#ccffcc;"></div>
<div class="n c" style="left:863px;top:432px;width:33px;height:16px;background:#c0c0c0;"></div>
<div class="n m" style="left:897px;top:432px;width:79px;height:16px;background:#c0c0c0;"></div>
<div style="left:36px;top:431px;width:22px;height:18px;background:#e6e6e6;border:1px solid #000080;border-top-color:#000080;border-bottom:none;"></div>
<div class="lb" style="left:57px;top:431px;width:12px;height:18px;font-size:12px;line-height:14px;text-indent:0;text-align:left;"><i class="nr">月</i></div>
<div class="xb" style="left:977px;top:431px;width:18px;height:17px;">×</div>
<div style="left:68px;top:448px;width:909px;height:18px;background:#a0a0a0;"></div>
<div class="n c" style="left:69px;top:449px;width:33px;height:16px;background:#fff;"></div>
<div class="n m" style="left:103px;top:449px;width:79px;height:16px;background:#e6e6e6;"></div>
<div class="n c" style="left:183px;top:449px;width:33px;height:16px;background:#fff;"></div>
<div class="n m" style="left:217px;top:449px;width:78px;height:16px;background:#e6e6e6;"></div>
<div class="n c" style="left:296px;top:449px;width:33px;height:16px;background:#fff;"></div>
<div class="n m" style="left:330px;top:449px;width:79px;height:16px;background:#e6e6e6;"></div>
<div class="n c" style="left:410px;top:449px;width:33px;height:16px;background:#ccffcc;"></div>
<div class="n m" style="left:444px;top:449px;width:78px;height:16px;background:#ccffcc;"></div>
<div class="n c" style="left:523px;top:449px;width:33px;height:16px;background:#fff;"></div>
<div class="n m" style="left:557px;top:449px;width:78px;height:16px;background:#e6e6e6;"></div>
<div class="n c" style="left:636px;top:449px;width:33px;height:16px;background:#fff;"></div>
<div class="n m" style="left:670px;top:449px;width:79px;height:16px;background:#e6e6e6;"></div>
<div class="n c" style="left:750px;top:449px;width:33px;height:16px;background:#ccffcc;"></div>
<div class="n m" style="left:784px;top:449px;width:78px;height:16px;background:#ccffcc;"></div>
<div class="n c" style="left:863px;top:449px;width:33px;height:16px;background:#c0c0c0;"></div>
<div class="n m" style="left:897px;top:449px;width:79px;height:16px;background:#c0c0c0;"></div>
<div style="left:36px;top:448px;width:22px;height:18px;background:#e6e6e6;border:1px solid #000080;border-top-color:#a0a0a0;border-bottom:none;"></div>
<div class="lb" style="left:57px;top:448px;width:12px;height:18px;font-size:12px;line-height:14px;text-indent:0;text-align:left;"><i class="nr">月</i></div>
<div class="xb" style="left:977px;top:448px;width:18px;height:17px;">×</div>
<div style="left:68px;top:465px;width:909px;height:18px;background:#a0a0a0;"></div>
<div class="n c" style="left:69px;top:466px;width:33px;height:16px;background:#fff;"></div>
<div class="n m" style="left:103px;top:466px;width:79px;height:16px;background:#e6e6e6;"></div>
<div class="n c" style="left:183px;top:466px;width:33px;height:16px;background:#fff;"></div>
<div class="n m" style="left:217px;top:466px;width:78px;height:16px;background:#e6e6e6;"></div>
<div class="n c" style="left:296px;top:466px;width:33px;height:16px;background:#fff;"></div>
<div class="n m" style="left:330px;top:466px;width:79px;height:16px;background:#e6e6e6;"></div>
<div class="n c" style="left:410px;top:466px;width:33px;height:16px;background:#ccffcc;"></div>
<div class="n m" style="left:444px;top:466px;width:78px;height:16px;background:#ccffcc;"></div>
<div class="n c" style="left:523px;top:466px;width:33px;height:16px;background:#fff;"></div>
<div class="n m" style="left:557px;top:466px;width:78px;height:16px;background:#e6e6e6;"></div>
<div class="n c" style="left:636px;top:466px;width:33px;height:16px;background:#fff;"></div>
<div class="n m" style="left:670px;top:466px;width:79px;height:16px;background:#e6e6e6;"></div>
<div class="n c" style="left:750px;top:466px;width:33px;height:16px;background:#ccffcc;"></div>
<div class="n m" style="left:784px;top:466px;width:78px;height:16px;background:#ccffcc;"></div>
<div class="n c" style="left:863px;top:466px;width:33px;height:16px;background:#c0c0c0;"></div>
<div class="n m" style="left:897px;top:466px;width:79px;height:16px;background:#c0c0c0;"></div>
<div style="left:36px;top:465px;width:22px;height:18px;background:#e6e6e6;border:1px solid #000080;border-top-color:#a0a0a0;border-bottom:none;"></div>
<div class="lb" style="left:57px;top:465px;width:12px;height:18px;font-size:12px;line-height:14px;text-indent:0;text-align:left;"><i class="nr">月</i></div>
<div class="xb" style="left:977px;top:465px;width:18px;height:17px;">×</div>
<div class="lb" style="left:21px;top:380px;width:16px;height:103px;font-size:12px;line-height:15px;white-space:normal;padding-top:26px;">賞<br>与<br>等</div>
<div style="left:68px;top:482px;width:909px;height:18px;background:#a0a0a0;"></div>
<div class="n m" style="left:69px;top:483px;width:113px;height:16px;background:#ccffcc;">28,542,550</div>
<div class="n m" style="left:183px;top:483px;width:112px;height:16px;background:#ccffcc;">0</div>
<div class="n m" style="left:296px;top:483px;width:113px;height:16px;background:#ccffcc;">0</div>
<div class="n m" style="left:410px;top:483px;width:112px;height:16px;background:#ccffcc;">28,542,550</div>
<div class="n m" style="left:523px;top:483px;width:112px;height:16px;background:#ccffcc;">28,542,550</div>
<div class="n m" style="left:636px;top:483px;width:113px;height:16px;background:#ccffcc;">0</div>
<div class="n m" style="left:750px;top:483px;width:112px;height:16px;background:#ccffcc;">28,542,550</div>
<div class="n m" style="left:863px;top:483px;width:113px;height:16px;background:#ccffcc;"></div>
<div class="lb" style="left:21px;top:482px;width:48px;height:18px;font-size:12px;">合　計</div>
<div style="left:371px;top:499px;width:39px;height:18px;background:#a0a0a0;"></div>
<div class="n c" style="left:372px;top:500px;width:37px;height:16px;background:#fff;">10</div>
<div style="left:409px;top:499px;width:114px;height:18px;background:#a0a0a0;"></div>
<div class="n m" style="left:410px;top:500px;width:112px;height:16px;background:#ccffcc;">28,542</div>
<div style="left:522px;top:499px;width:455px;height:18px;background:#a0a0a0;"></div>
<div style="left:523px;top:500px;width:226px;height:16px;background:#f0f0f0;font-size:12.5px;line-height:16px;text-align:center;">1ヶ月平均使用労働者数</div>
<div class="n c" style="left:750px;top:500px;width:33px;height:16px;background:#fff;">10</div>
<div class="n m" style="left:784px;top:500px;width:78px;height:16px;background:#ccffcc;">28,542</div>
<div class="n c" style="left:863px;top:500px;width:33px;height:16px;background:#fff;"></div>
<div class="n m" style="left:897px;top:500px;width:79px;height:16px;background:#ccffcc;"></div>
<div style="left:236px;top:500px;width:132px;height:16px;font-size:12.5px;line-height:16px;text-align:right;">1ヶ月平均使用労働者数</div>
<div style="left:21px;top:503px;width:206px;height:38px;background:#000080;"></div>
<div class="btn" style="left:26px;top:507px;width:95px;height:30px;font-size:13px;line-height:26px;text-indent:-2px;">賃金読込</div>
<div class="btn" style="left:128px;top:507px;width:95px;height:30px;font-size:13px;line-height:26px;color:#f00;text-indent:-1px;">労<i style="font-family:'Noto Sans CJK JP',sans-serif">→</i>雇 転記</div>
<div style="left:30px;top:547px;width:12px;height:11px;background:#fff;border:1px solid #000;"></div>
<div style="left:46px;top:545px;width:200px;height:16px;font-size:12px;line-height:16px;">賃金読込時に賞与人数を取得する</div>
<div style="left:257px;top:543px;width:720px;height:61px;background:#e9f0fa;border:1px solid #000080;"></div>
<div class="sh" style="left:257px;top:525px;width:145px;height:19px;">3. 事業の概要</div>
<div class="sh" style="left:401px;top:525px;width:145px;height:19px;">4. 特掲事業</div>
<div class="sh" style="left:545px;top:525px;width:288px;height:19px;">5. 新年度賃金見込額（印刷様式 319）</div>
<div class="sh" style="left:832px;top:525px;width:144px;height:19px;">6. 延納の申請</div>
<div class="inp" style="left:257px;top:546px;width:60px;height:20px;font-size:12.6px;line-height:19px;text-align:right;padding-right:18px;">9436</div>
<div style="left:299px;top:547px;width:17px;height:18px;background:#e1e1e1;border:1px solid #adadad;"></div>
<svg style="left:303px;top:554px" width="9" height="6" viewBox="0 0 9 6"><path d="M0.5 0.5 L4.5 4.5 L8.5 0.5" fill="none" stroke="#404040" stroke-width="1.3"/></svg>
<div class="btn" style="left:324px;top:546px;width:60px;height:18px;font-size:12px;line-height:18px;">概要読込</div>
<div class="inp" style="left:257px;top:565px;width:145px;height:35px;font-size:12px;line-height:21px;padding-left:1px;">システム開発・販売</div>
<div class="t12" style="left:413px;top:554px;width:100px;height:15px;color:#c8c8c8;letter-spacing:.2px;">1. 該当する</div>
<div class="t12" style="left:413px;top:573px;width:100px;height:15px;color:#ff1493;letter-spacing:.2px;">2. 該当しない</div>
<div class="t12" style="left:556px;top:550px;width:24px;height:15px;color:#000080;">労災</div>
<div class="inp" style="left:582px;top:546px;width:100px;height:20px;font-size:12px;line-height:20px;padding-left:2px;">前年と同額</div>
<div style="left:664px;top:547px;width:17px;height:18px;background:#e1e1e1;border:1px solid #adadad;"></div>
<svg style="left:668px;top:554px" width="9" height="6" viewBox="0 0 9 6"><path d="M0.5 0.5 L4.5 4.5 L8.5 0.5" fill="none" stroke="#404040" stroke-width="1.3"/></svg>
<div class="inp" style="left:582px;top:565px;width:69px;height:18px;"></div>
<div class="t12" style="left:651px;top:567px;width:24px;height:15px;">千円</div>
<div class="t12" style="left:704px;top:550px;width:24px;height:15px;color:#000080;">雇用</div>
<div class="inp" style="left:730px;top:546px;width:99px;height:20px;font-size:12px;line-height:20px;padding-left:2px;">前年と同額</div>
<div style="left:811px;top:547px;width:17px;height:18px;background:#e1e1e1;border:1px solid #adadad;"></div>
<svg style="left:815px;top:554px" width="9" height="6" viewBox="0 0 9 6"><path d="M0.5 0.5 L4.5 4.5 L8.5 0.5" fill="none" stroke="#404040" stroke-width="1.3"/></svg>
<div class="inp" style="left:730px;top:565px;width:69px;height:18px;"></div>
<div class="inp" style="left:730px;top:582px;width:69px;height:18px;"></div>
<div class="t12" style="left:799px;top:566px;width:24px;height:15px;">千円</div>
<div class="t12" style="left:799px;top:583px;width:24px;height:15px;">千円</div>
<div style="left:695px;top:569px;width:33px;height:14px;color:#000080;font-size:11px;line-height:14px;">上半期</div>
<div style="left:695px;top:586px;width:33px;height:14px;color:#000080;font-size:11px;line-height:14px;">下半期</div>
<div class="t12" style="left:843px;top:554px;width:100px;height:15px;color:#c8c8c8;">1. 一括納付</div>
<div class="t12" style="left:843px;top:572px;width:100px;height:15px;color:#ff1493;">2. 分割（3回）</div>
<svg style="left:0;top:0" width="1010" height="625" viewBox="0 0 1010 625"><rect x="321.5" y="543.5" width="64.2" height="22.9" fill="none" stroke="#ed1c24" stroke-width="4.6"/><line x1="253.4" y1="585.4" x2="371.6" y2="585.4" stroke="#ed1c24" stroke-width="5.2" stroke-linecap="round"/><polygon points="400.2,491.5 409,495.8 396.75,517.76 401.4,520.35 383.4,530 383.05,510.3 388.1,513.1" fill="none" stroke="#ed1c24" stroke-width="5.7" stroke-linejoin="miter"/></svg>
</body></html>
